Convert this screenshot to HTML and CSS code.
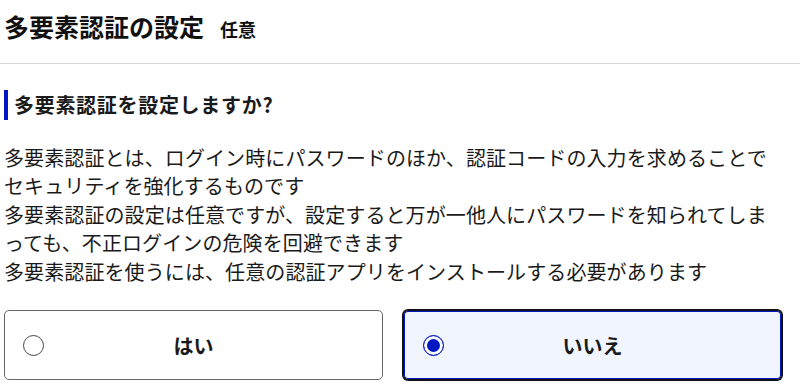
FILE: index.html
```html
<!DOCTYPE html>
<html lang="ja">
<head>
<meta charset="utf-8">
<link rel="stylesheet" href="styles.css">
</head>
<body>
<header class="page-head">
  <h1 class="title">多要素認証の設定</h1>
  <span class="tag">任意</span>
</header>
<main class="content">
  <h2 class="question">多要素認証を設定しますか?</h2>
  <p class="desc">多要素認証とは、ログイン時にパスワードのほか、認証コードの入力を求めることでセキュリティを強化するものです<br>多要素認証の設定は任意ですが、設定すると万が一他人にパスワードを知られてしまっても、不正ログインの危険を回避できます<br>多要素認証を使うには、任意の認証アプリをインストールする必要があります</p>
  <div class="choices">
    <label class="choice">
      <span class="radio"></span>
      <span class="choice-label">はい</span>
    </label>
    <label class="choice selected">
      <span class="radio"></span>
      <span class="choice-label">いいえ</span>
    </label>
  </div>
</main>
</body>
</html>
```
FILE: styles.css
```css
* { box-sizing: border-box; }
html, body {
  margin: 0;
  padding: 0;
  background: #fff;
}
body {
  font-family: "Noto Sans CJK JP", "Noto Sans", sans-serif;
  color: #1a1a1a;
  width: 800px;
  height: 392px;
  overflow: hidden;
}
.page-head {
  display: flex;
  align-items: baseline;
  gap: 16px;
  padding: 8px 4px 19px;
  border-bottom: 1px solid #d6d6d6;
}
.title {
  margin: 0;
  font-size: 25px;
  line-height: 36px;
  font-weight: 700;
  color: #111;
}
.tag {
  font-size: 18px;
  font-weight: 700;
  color: #111;
}
.content {
  padding: 26px 4px 0;
  width: 786px;
}
.question {
  margin: 0;
  font-size: 20px;
  line-height: 30px;
  font-weight: 700;
  letter-spacing: 0.7px;
  border-left: 4px solid #0017c1;
  padding-left: 6px;
  color: #1a1a1a;
}
.desc {
  margin: 24px 0 0;
  font-size: 20px;
  line-height: 28.4px;
  letter-spacing: 0.1px;
  color: #1a1a1a;
}
.choices {
  display: grid;
  grid-template-columns: 1fr 1fr;
  gap: 20px;
  margin-top: 24px;
}
.choice {
  display: grid;
  grid-template-columns: 1fr auto 1fr;
  align-items: center;
  height: 70px;
  padding: 0 18px;
  border: 1px solid #666;
  border-radius: 5px;
  background: #fff;
}
.choice.selected {
  border: 1px solid #111;
  box-shadow: inset 0 0 0 1px #0017c1, 0 0 0 1px #111;
  background: #f1f5ff;
  padding: 0 19px;
}
.radio {
  width: 21px;
  height: 21px;
  border-radius: 50%;
  border: 1px solid #444;
  background: #fff;
  justify-self: start;
}
.selected .radio {
  border: 1.5px solid #0017c1;
  background: #0017c1;
  box-shadow: inset 0 0 0 3px #fff;
}
.choice-label {
  font-size: 20px;
  font-weight: 700;
  color: #1a1a1a;
}
```
